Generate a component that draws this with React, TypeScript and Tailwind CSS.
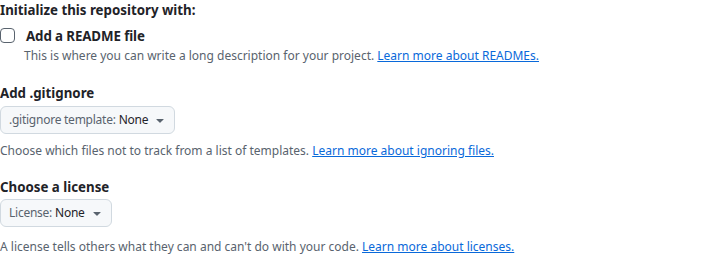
import React from "react";

function Caret() {
  return (
    <svg width="16" height="16" viewBox="0 0 16 16" className="ml-[4px] fill-[#59636e]">
      <path d="m4.427 7.427 3.396 3.396a.25.25 0 0 0 .354 0l3.396-3.396A.25.25 0 0 0 11.396 7H4.604a.25.25 0 0 0-.177.427Z" />
    </svg>
  );
}

function SelectButton({ label }: { label: string }) {
  return (
    <button className="flex h-[28px] items-center rounded-md border border-[#d1d9e0] bg-[#f6f8fa] pl-[8px] pr-[6px] text-[12px] tracking-[-0.25px] text-[#1f2328]">
      <span className="text-[#59636e]">{label}</span>
      <span className="ml-[3px] text-[#1f2328]">None</span>
      <Caret />
    </button>
  );
}

export default function App() {
  return (
    <div className="w-[704px] h-[254px] bg-white text-[#1f2328]" style={{ fontFamily: '"Noto Sans", sans-serif' }}>
      <div className="text-[13.3px] font-bold leading-[20px]">Initialize this repository with:</div>
      <div className="mt-[6px] flex">
        <div className="w-[16px] pt-[2px]">
          <div className="h-[15px] w-[15px] rounded-[4px] border border-[#59636e] bg-white" />
        </div>
        <div className="ml-[10px]">
          <div className="text-[13.3px] font-bold leading-[20px] tracking-[-0.1px]">Add a README file</div>
          <div className="-ml-[2px] mt-[1px] text-[12px] leading-[18px] text-[#59636e]">
            This is where you can write a long description for your project.{" "}
            <a className="text-[#0969da] underline">Learn more about READMEs.</a>
          </div>
        </div>
      </div>
      <div className="mt-[18px] text-[13.3px] font-bold leading-[20px]">Add .gitignore</div>
      <div className="mt-[3px] flex">
        <SelectButton label=".gitignore template:" />
      </div>
      <div className="mt-[8px] text-[12px] leading-[18px] text-[#59636e]">
        Choose which files not to track from a list of templates.{" "}
        <a className="text-[#0969da] underline">Learn more about ignoring files.</a>
      </div>
      <div className="mt-[17px] text-[13.3px] font-bold leading-[20px]">Choose a license</div>
      <div className="mt-[2px] flex">
        <SelectButton label="License:" />
      </div>
      <div className="mt-[11px] text-[12px] leading-[18px] text-[#59636e]">
        A license tells others what they can and can't do with your code.{" "}
        <a className="text-[#0969da] underline">Learn more about licenses.</a>
      </div>
    </div>
  );
}
